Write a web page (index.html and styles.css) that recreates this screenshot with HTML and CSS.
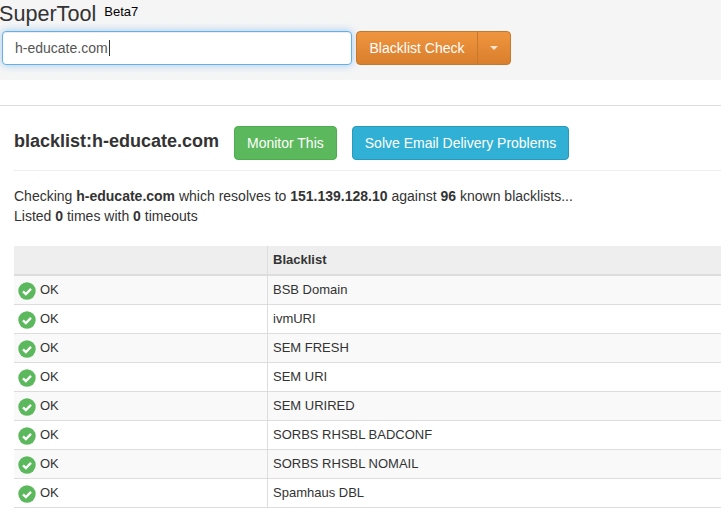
FILE: index.html
```html
<!DOCTYPE html>
<html lang="en">
<head>
<meta charset="utf-8">
<title>SuperTool</title>
<link rel="stylesheet" href="styles.css">
</head>
<body>
<header class="hero">
  <div class="brand"><span class="brand-name">SuperTool</span><span class="brand-tag">Beta7</span></div>
  <div class="search">
    <div class="search-input">h-educate.com<span class="caret"></span></div>
    <div class="split">
      <span class="btn-orange main">Blacklist Check</span>
      <span class="btn-orange drop"><span class="arrow"></span></span>
    </div>
  </div>
</header>
<hr class="rule">
<main class="content">
  <div class="title-row">
    <h1 class="title">blacklist:h-educate.com</h1>
    <span class="btn green">Monitor This</span>
    <span class="btn blue">Solve Email Delivery Problems</span>
  </div>
  <div class="summary">
    <p>Checking <b>h-educate.com</b> which resolves to <b>151.139.128.10</b> against <b>96</b> known blacklists...</p>
    <p>Listed <b>0</b> times with <b>0</b> timeouts</p>
  </div>
  <table class="results">
    <thead><tr><th class="c1"></th><th>Blacklist</th></tr></thead>
    <tbody>
      <tr><td class="status"><svg class="ok" viewBox="0 0 18 18"><circle cx="9" cy="9" r="8.7" fill="#5cb85c"/><path d="M5 9.3l2.9 2.8L13 6.9" fill="none" stroke="#fff" stroke-width="2.3"/></svg>OK</td><td>BSB Domain</td></tr>
      <tr><td class="status"><svg class="ok" viewBox="0 0 18 18"><circle cx="9" cy="9" r="8.7" fill="#5cb85c"/><path d="M5 9.3l2.9 2.8L13 6.9" fill="none" stroke="#fff" stroke-width="2.3"/></svg>OK</td><td>ivmURI</td></tr>
      <tr><td class="status"><svg class="ok" viewBox="0 0 18 18"><circle cx="9" cy="9" r="8.7" fill="#5cb85c"/><path d="M5 9.3l2.9 2.8L13 6.9" fill="none" stroke="#fff" stroke-width="2.3"/></svg>OK</td><td>SEM FRESH</td></tr>
      <tr><td class="status"><svg class="ok" viewBox="0 0 18 18"><circle cx="9" cy="9" r="8.7" fill="#5cb85c"/><path d="M5 9.3l2.9 2.8L13 6.9" fill="none" stroke="#fff" stroke-width="2.3"/></svg>OK</td><td>SEM URI</td></tr>
      <tr><td class="status"><svg class="ok" viewBox="0 0 18 18"><circle cx="9" cy="9" r="8.7" fill="#5cb85c"/><path d="M5 9.3l2.9 2.8L13 6.9" fill="none" stroke="#fff" stroke-width="2.3"/></svg>OK</td><td>SEM URIRED</td></tr>
      <tr><td class="status"><svg class="ok" viewBox="0 0 18 18"><circle cx="9" cy="9" r="8.7" fill="#5cb85c"/><path d="M5 9.3l2.9 2.8L13 6.9" fill="none" stroke="#fff" stroke-width="2.3"/></svg>OK</td><td>SORBS RHSBL BADCONF</td></tr>
      <tr><td class="status"><svg class="ok" viewBox="0 0 18 18"><circle cx="9" cy="9" r="8.7" fill="#5cb85c"/><path d="M5 9.3l2.9 2.8L13 6.9" fill="none" stroke="#fff" stroke-width="2.3"/></svg>OK</td><td>SORBS RHSBL NOMAIL</td></tr>
      <tr><td class="status"><svg class="ok" viewBox="0 0 18 18"><circle cx="9" cy="9" r="8.7" fill="#5cb85c"/><path d="M5 9.3l2.9 2.8L13 6.9" fill="none" stroke="#fff" stroke-width="2.3"/></svg>OK</td><td>Spamhaus DBL</td></tr>
    </tbody>
  </table>
</main>
</body>
</html>
```

FILE: styles.css
```css
* { box-sizing: border-box; }
html, body { margin: 0; padding: 0; width: 721px; height: 509px; overflow: hidden; background: #fff; }
body { font-family: "Liberation Sans", Arial, sans-serif; font-size: 14px; line-height: 20px; color: #333; }

.hero { height: 80px; background: #f5f5f5; padding: 0 0 0 2px; }
.brand { height: 31px; margin-left: -3px; display: flex; align-items: flex-start; }
.brand-name { font-size: 21.6px; line-height: 27px; color: #333; }
.brand-tag { font-size: 13px; line-height: 24px; color: #000; margin-left: 8px; }

.search { display: flex; gap: 4px; }
.search-input {
  width: 350px; height: 34px; background: #fff; border: 1px solid #66afe9; border-radius: 4px;
  padding: 6px 12px; color: #555; line-height: 20px; display: flex; align-items: center;
  box-shadow: inset 0 1px 1px rgba(0,0,0,.075), 0 0 8px rgba(102,175,233,.6);
}
.caret { width: 1px; height: 16px; background: #333; margin-left: 1px; }

.split { display: flex; }
.btn-orange {
  height: 34px; display: flex; align-items: center; justify-content: center; color: #fff;
  background: linear-gradient(to bottom, #f0953f, #d97f2d); border: 1px solid #c8772b;
}
.main { width: 122px; border-radius: 4px 0 0 4px; }
.drop { width: 34px; margin-left: -1px; border-radius: 0 4px 4px 0; }
.arrow { width: 0; height: 0; border-top: 4px solid #f7e3cf; border-left: 4px solid transparent; border-right: 4px solid transparent; }

.rule { height: 1px; border: 0; background: #ddd; margin: 25px 0 0; }

.content { padding: 0 0 0 14px; }
.title-row { display: flex; align-items: flex-start; height: 65px; padding-top: 20px; border-bottom: 1px solid #eee; }
.title { font-size: 18px; line-height: 30px; font-weight: bold; margin: 0 15px 0 0; color: #333; width: 205px; white-space: nowrap; }
.btn { height: 34px; padding: 0 12px; border-radius: 4px; color: #fff; display: flex; align-items: center; border: 1px solid; }
.green { background: #5cb85c; border-color: #4cae4c; margin-right: 15px; }
.blue { background: #31b0d5; border-color: #269abc; }

.summary { margin-top: 15px; }
.summary p { margin: 0; }
.summary b { color: #333; }

.results { margin-top: 20px; width: 707px; border-collapse: separate; border-spacing: 0; table-layout: fixed; font-size: 13px; }
.results th { height: 30px; background: #eee; text-align: left; padding: 0 5px; font-size: 13px; border-bottom: 2px solid #ddd; border-left: 1px solid #ddd; }
.results th.c1 { width: 253px; border-left: 0; }
.results td { height: 29px; padding: 0 5px; border-bottom: 1px solid #ddd; border-left: 1px solid #ddd; }
.results td.status { border-left: 0; padding: 0 0 0 4px; }
.results tbody tr:nth-child(odd) { background: #f9f9f9; }
.ok { width: 18px; height: 18px; margin-right: 4px; vertical-align: -6px; }
```
